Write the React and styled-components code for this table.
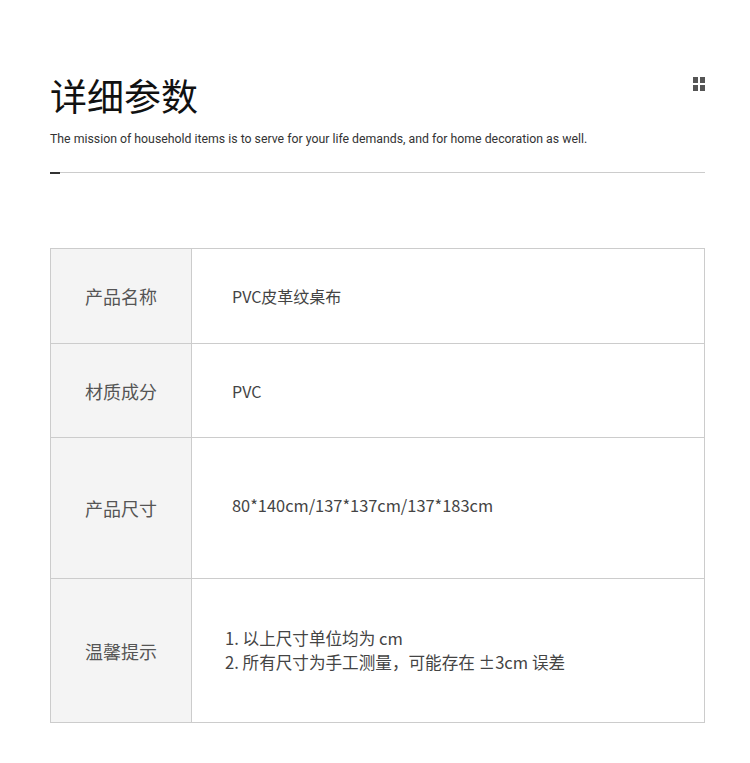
import React from "react";
import styled, { createGlobalStyle } from "styled-components";

const GlobalStyle = createGlobalStyle`
  body {
    margin: 0;
    background: #fff;
    font-family: "Noto Sans CJK SC", "Noto Sans", sans-serif;
  }
`;

const rows = [
  { label: "产品名称", height: 95, value: "PVC皮革纹桌布", size: 16 },
  { label: "材质成分", height: 94, value: "PVC", size: 16 },
  { label: "产品尺寸", height: 141, value: "80*140cm/137*137cm/137*183cm", size: 16.4, lift: 6 },
  {
    label: "温馨提示",
    height: 144,
    size: 16.6,
    lift: 2,
    lines: ["1. 以上尺寸单位均为 cm", "2. 所有尺寸为手工测量，可能存在 ±3cm 误差"],
  },
];

function App() {
  return (
    <Page>
      <GlobalStyle />
      <Header>
        <TitleRow>
          <Title>详细参数</Title>
          <GridIcon>
            <span />
            <span />
            <span />
            <span />
          </GridIcon>
        </TitleRow>
        <Subtitle>
          The mission of household items is to serve for your life demands, and for home decoration as well.
        </Subtitle>
        <Rule />
      </Header>

      <Table>
        {rows.map((row) => (
          <Row key={row.label} $height={row.height}>
            <Label>{row.label}</Label>
            {row.lines ? (
              <Value $indent={33} $lift={row.lift} $size={row.size}>
                {row.lines.map((line) => (
                  <div key={line}>{line}</div>
                ))}
              </Value>
            ) : (
              <Value $indent={40} $lift={row.lift} $size={row.size}>
                {row.value}
              </Value>
            )}
          </Row>
        ))}
      </Table>
    </Page>
  );
}

const Page = styled.div`
  width: 750px;
  min-height: 763px;
  padding: 0 45px 0 50px;
  box-sizing: border-box;
`;

const Header = styled.header`
  padding-top: 70px;
`;

const TitleRow = styled.div`
  display: flex;
  justify-content: space-between;
  align-items: flex-start;
`;

const Title = styled.h1`
  margin: 0;
  font-family: "Noto Sans CJK SC", sans-serif;
  font-weight: 400;
  font-size: 37px;
  line-height: 50px;
  color: #111;
`;

const GridIcon = styled.div`
  display: grid;
  grid-template-columns: 5px 5px;
  grid-auto-rows: 6px;
  gap: 2px;
  margin-top: 7px;

  span {
    background: #555;
  }
`;

const Subtitle = styled.p`
  margin: 11px 0 0;
  font-family: "Roboto", "Liberation Sans", sans-serif;
  font-size: 12.3px;
  line-height: 16px;
  color: #333;
`;

const Rule = styled.div`
  margin-top: 25px;
  height: 1px;
  background: #ccc;
  position: relative;

  &::before {
    content: "";
    position: absolute;
    left: 0;
    top: 0;
    width: 10px;
    height: 1.5px;
    background: #333;
  }
`;

const Table = styled.div`
  margin-top: 75px;
  border: 1.5px solid #ccc;
  border-bottom: none;
`;

const Row = styled.div`
  display: grid;
  grid-template-columns: 141px 1fr;
  height: ${(p) => p.$height}px;
  border-bottom: 1.5px solid #ccc;
  box-sizing: border-box;
`;

const Label = styled.div`
  display: flex;
  align-items: center;
  justify-content: center;
  background: #f4f4f4;
  border-right: 1.5px solid #ccc;
  font-size: 18px;
  color: #555;
`;

const Value = styled.div`
  display: flex;
  flex-direction: column;
  justify-content: center;
  padding-left: ${(p) => p.$indent}px;
  padding-bottom: ${(p) => p.$lift || 0}px;
  font-size: ${(p) => p.$size}px;
  line-height: 24px;
  color: #444;
`;

export default App;
